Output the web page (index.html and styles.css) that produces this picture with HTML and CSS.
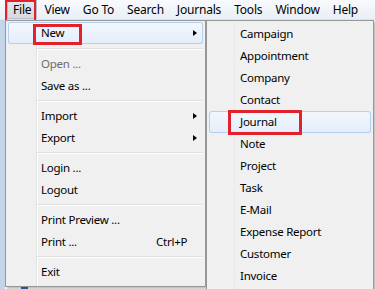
FILE: index.html
```html
<!DOCTYPE html>
<html lang="en">
<head>
  <meta charset="UTF-8">
  <meta name="viewport" content="width=device-width, initial-scale=1.0">
  <title>File menu</title>
  <link rel="stylesheet" href="styles.css">
</head>
<body>
  <div class="window">
    <div class="menubar">
      <div class="menubar-item open">File</div>
      <div class="menubar-item">View</div>
      <div class="menubar-item">Go To</div>
      <div class="menubar-item">Search</div>
      <div class="menubar-item">Journals</div>
      <div class="menubar-item">Tools</div>
      <div class="menubar-item">Window</div>
      <div class="menubar-item">Help</div>
    </div>
    <div class="content">
      <span class="doc-icon"></span>
    </div>

    <span class="mark mark-file"></span>

    <div class="menu file-menu">
      <div class="menu-item active has-sub">New</div>
      <div class="menu-sep first"></div>
      <div class="menu-item disabled">Open ...</div>
      <div class="menu-item">Save as ...</div>
      <div class="menu-sep"></div>
      <div class="menu-item has-sub">Import</div>
      <div class="menu-item has-sub">Export</div>
      <div class="menu-sep"></div>
      <div class="menu-item">Login ...</div>
      <div class="menu-item">Logout</div>
      <div class="menu-sep"></div>
      <div class="menu-item">Print Preview ...</div>
      <div class="menu-item">Print ...<span class="shortcut">Ctrl+P</span></div>
      <div class="menu-sep"></div>
      <div class="menu-item">Exit</div>
    </div>

    <div class="menu sub-menu">
      <div class="menu-item">Campaign</div>
      <div class="menu-item">Appointment</div>
      <div class="menu-item">Company</div>
      <div class="menu-item">Contact</div>
      <div class="menu-item active">Journal</div>
      <div class="menu-item">Note</div>
      <div class="menu-item">Project</div>
      <div class="menu-item">Task</div>
      <div class="menu-item">E-Mail</div>
      <div class="menu-item">Expense Report</div>
      <div class="menu-item">Customer</div>
      <div class="menu-item">Invoice</div>
    </div>

    <span class="mark mark-new"></span>
    <span class="mark mark-journal"></span>
  </div>
</body>
</html>
```

FILE: styles.css
```css
body {
  margin: 0;
  font-family: "Noto Sans", "Open Sans", sans-serif;
  font-size: 11.5px;
  letter-spacing: -0.25px;
  color: #000;
  overflow: hidden;
}
.window {
  position: relative;
  width: 375px;
  height: 289px;
  background: #c4d5eb;
}
.menubar {
  display: flex;
  height: 20px;
  padding-left: 7px;
  font-size: 12px;
  letter-spacing: -0.2px;
  background: linear-gradient(#f8fafd, #e9eff7);
  border-bottom: 1px solid #dde4ee;
  box-sizing: border-box;
}
.menubar-item {
  padding: 0 6px;
  margin-right: 1px;
  line-height: 19px;
}
.menubar-item.open {
  background: linear-gradient(#e4e7ec, #d5d9e0);
  box-shadow: inset 0 0 0 1px #b9bec7;
}
.content {
  position: absolute;
  left: 5px;
  right: 0;
  top: 20px;
  bottom: 0;
  background: #fff;
}
.doc-icon {
  position: absolute;
  left: 16px;
  bottom: 0;
  width: 7px;
  height: 2px;
  background: #2f6fb3;
}

/* dropdowns */
.menu {
  position: absolute;
  top: 20px;
  background: #f0f0f0;
  border: 1px solid #979797;
  padding: 1px 2px;
  box-sizing: border-box;
  box-shadow: 2px 2px 2px rgba(0,0,0,0.25);
}
.file-menu {
  left: 5px;
  width: 201px;
  height: 267px;
  background: linear-gradient(90deg, transparent 30px, #e2e3e3 30px, #e2e3e3 31px, #fff 31px, #fff 32px, transparent 32px), #f0f0f0;
}
.sub-menu {
  left: 206px;
  width: 168px;
  height: 280px;
  padding-top: 2px;
  background: linear-gradient(90deg, transparent 27px, #e9e9e9 27px, #e9e9e9 28px, transparent 28px), #f0f0f0;
}
.menu-item {
  position: relative;
  height: 22px;
  line-height: 22px;
  padding-left: 33px;
  border-radius: 3px;
  white-space: nowrap;
}
.sub-menu .menu-item {
  padding-left: 31px;
}
.menu-item.active {
  background: linear-gradient(#f4f8fd, #e3edfa);
  box-shadow: inset 0 0 0 1px #b4cff0;
}
.menu-item.disabled {
  color: #6d6d6d;
}
.menu-item.has-sub::after {
  content: "";
  position: absolute;
  right: 6px;
  top: 8px;
  border-left: 4px solid #000;
  border-top: 3.5px solid transparent;
  border-bottom: 3.5px solid transparent;
}
.shortcut {
  position: absolute;
  left: 148px;
}
.menu-sep {
  height: 1px;
  margin: 3px 0 3px 29px;
  background: #e0e0e0;
  border-bottom: 1px solid #fff;
}
.menu-sep.first {
  margin-top: 4px;
}

/* red callout boxes */
.mark {
  position: absolute;
  border: 2px solid #e1222b;
  box-sizing: border-box;
}
.mark-file {
  left: 5px;
  top: 0;
  width: 31px;
  height: 22px;
}
.mark-new {
  left: 33px;
  top: 24px;
  width: 49px;
  height: 21px;
  border-width: 3px;
}
.mark-journal {
  left: 228px;
  top: 110px;
  width: 74px;
  height: 25px;
  border-width: 3px;
}
```
